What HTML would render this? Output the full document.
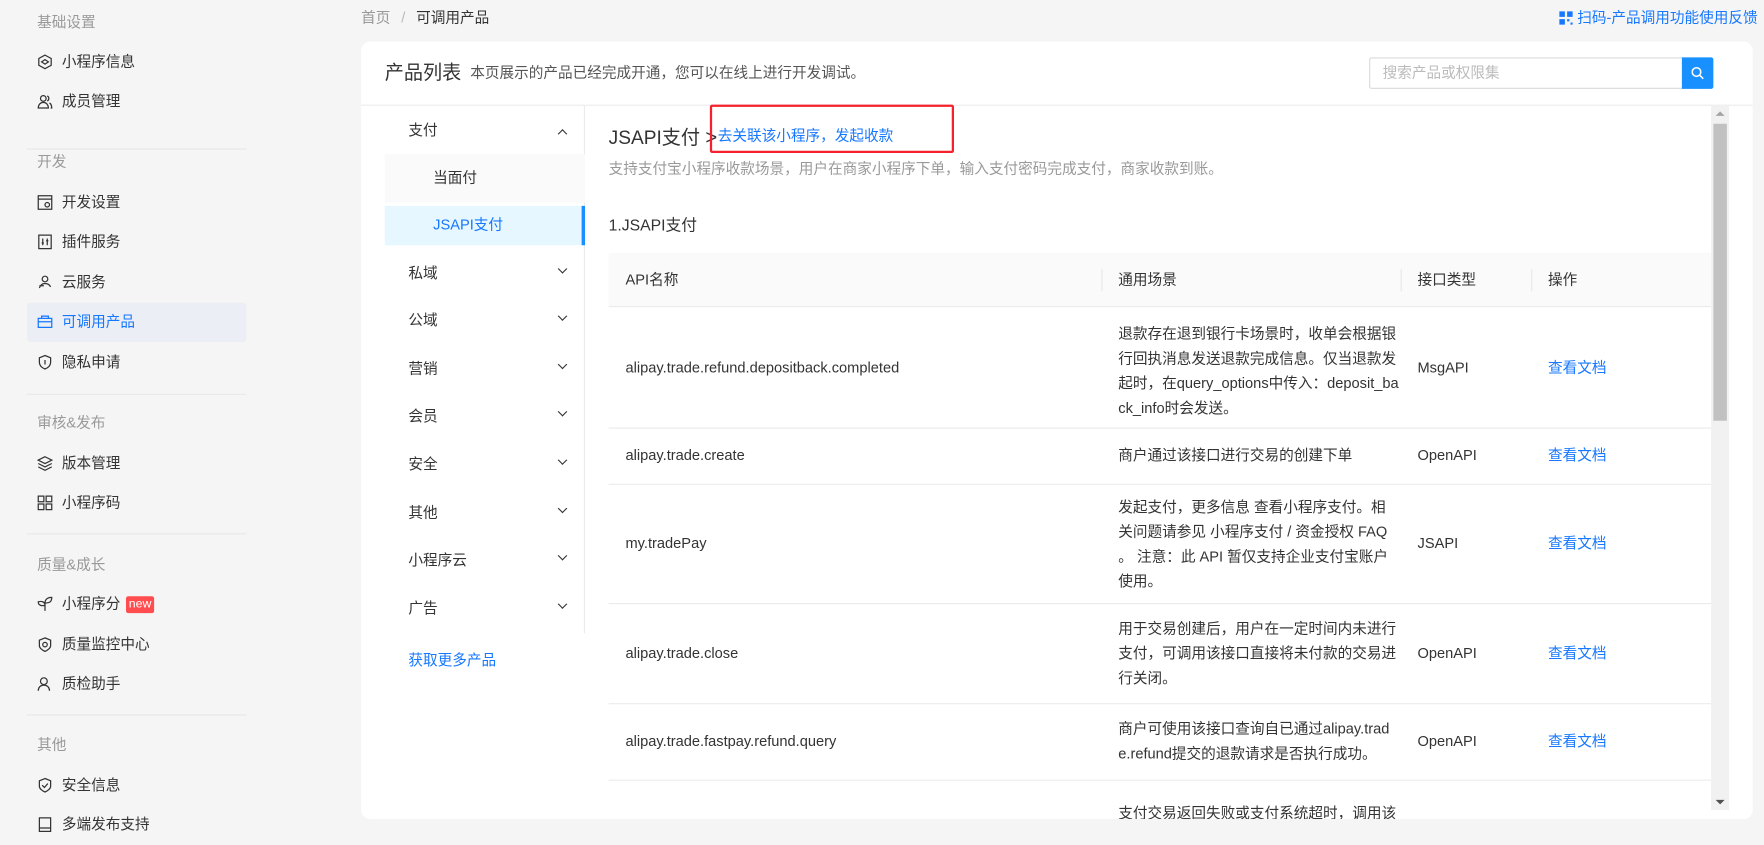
<!DOCTYPE html>
<html><head><meta charset="utf-8"><style>
*{box-sizing:border-box;margin:0;padding:0}
html,body{width:1764px;height:845px;overflow:hidden;background:#f5f5f5}
#w{position:absolute;left:0;top:0;width:1568px;height:751px;transform:scale(1.125);transform-origin:0 0;font-family:"Liberation Sans","Noto Sans CJK SC",sans-serif;font-size:13px;color:#333}
.a{position:absolute;white-space:nowrap;line-height:20px}
.sec{color:#999;left:33px}
.it{left:55px;color:#333}
.ic{position:absolute;left:33px;width:14px;height:14px}
.div{position:absolute;left:24px;width:195px;height:1px;background:#e8e8e8}
.card{position:absolute;left:321px;top:37px;width:1237px;height:691px;background:#fff;border-radius:8px;overflow:hidden}
.blue{color:#1677ff}
.mi{left:42px;color:#333}
.chev{position:absolute;left:176px;width:6px;height:6px;border-right:1.6px solid #333;border-bottom:1.6px solid #333;transform:rotate(45deg)}
.hl{position:absolute;left:220px;width:980px;height:1px;background:#ebebeb}
.td{position:absolute;line-height:22px;white-space:nowrap}
</style></head><body><div id="w">
<div class="a sec" style="top:10px">基础设置</div>
<svg class="ic" style="top:48px" viewBox="0 0 14 14" fill="none" stroke="#333" stroke-width="1.1"><path d="M7 1l5.5 3v6L7 13 1.5 10V4z"/><path d="M4 7l3-2 3 2-3 2z"/></svg>
<div class="a it" style="top:45px">小程序信息</div>
<svg class="ic" style="top:83px" viewBox="0 0 14 14" fill="none" stroke="#333" stroke-width="1.1"><circle cx="5.5" cy="4.5" r="2.5"/><path d="M1 13c0-3 2-5 4.5-5S10 10 10 13zM9 2.3a2.5 2.5 0 010 4.5M11 8.5c1.3.8 2 2.5 2 4.5h-1"/></svg>
<div class="a it" style="top:80px">成员管理</div>
<div class="div" style="top:132px"></div>
<div class="a sec" style="top:134px">开发</div>
<svg class="ic" style="top:173px" viewBox="0 0 14 14" fill="none" stroke="#333" stroke-width="1.1"><rect x="1" y="1" width="12" height="12"/><path d="M1 4h12"/><circle cx="9" cy="9" r="2"/></svg>
<div class="a it" style="top:170px">开发设置</div>
<svg class="ic" style="top:208px" viewBox="0 0 14 14" fill="none" stroke="#333" stroke-width="1.1"><rect x="1.5" y="1" width="11" height="12"/><path d="M5 4v6M9 4v6M4 8h2M8 6h2"/></svg>
<div class="a it" style="top:205px">插件服务</div>
<svg class="ic" style="top:244px" viewBox="0 0 14 14" fill="none" stroke="#333" stroke-width="1.1"><circle cx="7" cy="4" r="2.5"/><path d="M2 12c1-3 3-4 5-4s4 1 5 3M2 10h4"/></svg>
<div class="a it" style="top:241px">云服务</div>
<div style="position:absolute;left:24px;top:269px;width:195px;height:35px;background:#ebeef5;border-radius:3px"></div>
<svg class="ic" style="top:279px" viewBox="0 0 14 14" fill="none" stroke="#1677ff" stroke-width="1.1"><path d="M1 4h12v8H1zM4 4V2h6v2M1 7h12"/></svg>
<div class="a it blue" style="top:276px">可调用产品</div>
<svg class="ic" style="top:315px" viewBox="0 0 14 14" fill="none" stroke="#333" stroke-width="1.1"><path d="M7 1l5 2v4c0 3-2.5 5-5 6-2.5-1-5-3-5-6V3z"/><path d="M7 5v4"/></svg>
<div class="a it" style="top:312px">隐私申请</div>
<div class="div" style="top:350px"></div>
<div class="a sec" style="top:366px">审核&amp;发布</div>
<svg class="ic" style="top:405px" viewBox="0 0 14 14" fill="none" stroke="#333" stroke-width="1.1"><path d="M7 1l6 3-6 3-6-3zM1 7l6 3 6-3M1 10l6 3 6-3"/></svg>
<div class="a it" style="top:402px">版本管理</div>
<svg class="ic" style="top:440px" viewBox="0 0 14 14" fill="none" stroke="#333" stroke-width="1.1"><rect x="1" y="1" width="5" height="5"/><rect x="8" y="1" width="5" height="5"/><rect x="1" y="8" width="5" height="5"/><rect x="8" y="8" width="5" height="5"/></svg>
<div class="a it" style="top:437px">小程序码</div>
<div class="div" style="top:474px"></div>
<div class="a sec" style="top:492px">质量&amp;成长</div>
<svg class="ic" style="top:530px" viewBox="0 0 14 14" fill="none" stroke="#333" stroke-width="1.1"><path d="M7 13V6C7 3 9 1 13 1c0 4-2 5-6 5M7 8C7 5 4 4 1 5c0 3 3 4 6 3"/></svg>
<div class="a it" style="top:527px">小程序分</div>
<div style="position:absolute;left:112px;top:530px;width:25px;height:15px;background:#ff4d4f;border-radius:2px;color:#fff;font-size:11px;line-height:15px;text-align:center">new</div>
<svg class="ic" style="top:566px" viewBox="0 0 14 14" fill="none" stroke="#333" stroke-width="1.1"><path d="M7 1l5 2v5c0 2-2.5 4-5 5-2.5-1-5-3-5-5V3z"/><circle cx="7" cy="7" r="2"/></svg>
<div class="a it" style="top:563px">质量监控中心</div>
<svg class="ic" style="top:601px" viewBox="0 0 14 14" fill="none" stroke="#333" stroke-width="1.1"><circle cx="6" cy="4.5" r="3"/><path d="M1 13c0-3 2-5 5-5s5 2 5 5"/></svg>
<div class="a it" style="top:598px">质检助手</div>
<div class="div" style="top:635px"></div>
<div class="a sec" style="top:652px">其他</div>
<svg class="ic" style="top:691px" viewBox="0 0 14 14" fill="none" stroke="#333" stroke-width="1.1"><path d="M7 1l5 2v5c0 2-2.5 4-5 5-2.5-1-5-3-5-5V3z"/><path d="M4.5 7l2 2 3-3.5"/></svg>
<div class="a it" style="top:688px">安全信息</div>
<svg class="ic" style="top:726px" viewBox="0 0 14 14" fill="none" stroke="#333" stroke-width="1.1"><rect x="2" y="1" width="10" height="12"/><path d="M2 10h10"/></svg>
<div class="a it" style="top:723px">多端发布支持</div>

<div class="a" style="left:321px;top:6px;color:#999">首页 <span style="margin:0 6px;color:#bbb">/</span> <span style="color:#333">可调用产品</span></div>
<svg style="position:absolute;left:1386px;top:10px" width="12" height="12" viewBox="0 0 12 12" fill="#1677ff"><rect x="0" y="0" width="5" height="5"/><rect x="7" y="0" width="5" height="5"/><rect x="0" y="7" width="5" height="5"/><rect x="7" y="7" width="2" height="2"/><rect x="10" y="10" width="2" height="2"/></svg>
<div class="a blue" style="left:1402px;top:6px">扫码-产品调用功能使用反馈</div>

<div class="card">
  <div class="a" style="left:21px;top:16px;font-size:17px;line-height:24px;color:#333">产品列表</div>
  <div class="a" style="left:97px;top:18px;color:#555">本页展示的产品已经完成开通，您可以在线上进行开发调试。</div>
  <div style="position:absolute;left:896px;top:14px;width:280px;height:28px;border:1px solid #d9d9d9;border-radius:2px 0 0 2px"></div>
  <div class="a" style="left:908px;top:18px;color:#bbb">搜索产品或权限集</div>
  <div style="position:absolute;left:1174px;top:14px;width:28px;height:28px;background:#1890ff;border-radius:0 2px 2px 0"></div>
  <svg style="position:absolute;left:1182px;top:22px" width="12" height="12" viewBox="0 0 12 12" fill="none" stroke="#fff" stroke-width="1.4"><circle cx="5" cy="5" r="3.8"/><path d="M8 8l3 3"/></svg>
  <div style="position:absolute;left:0;top:56px;width:1237px;height:1px;background:#ebebeb"></div>

  <div style="position:absolute;left:198px;top:57px;width:1px;height:469px;background:#ebebeb"></div>
  <div class="a mi blue" style="top:69px">支付</div>
  <div style="position:absolute;left:176px;top:79px;width:6px;height:6px;border-left:1.6px solid #333;border-top:1.6px solid #333;transform:rotate(45deg)"></div>
  <div style="position:absolute;left:21px;top:100px;width:178px;height:43px;background:#fafafa"></div>
  <div class="a" style="left:64px;top:111px">当面付</div>
  <div style="position:absolute;left:21px;top:146px;width:178px;height:35px;background:#e6f7ff;border-right:3px solid #1890ff"></div>
  <div class="a blue" style="left:64px;top:153px">JSAPI支付</div>
  <div class="a mi" style="top:196px">私域</div><div class="chev" style="top:199px"></div>
  <div class="a mi" style="top:238px">公域</div><div class="chev" style="top:241px"></div>
  <div class="a mi" style="top:281px">营销</div><div class="chev" style="top:284px"></div>
  <div class="a mi" style="top:323px">会员</div><div class="chev" style="top:326px"></div>
  <div class="a mi" style="top:366px">安全</div><div class="chev" style="top:369px"></div>
  <div class="a mi" style="top:409px">其他</div><div class="chev" style="top:412px"></div>
  <div class="a mi" style="top:451px">小程序云</div><div class="chev" style="top:454px"></div>
  <div class="a mi" style="top:494px">广告</div><div class="chev" style="top:497px"></div>
  <div class="a blue" style="left:42px;top:540px">获取更多产品</div>

  <div class="a" style="left:220px;top:73px;font-size:17px;line-height:24px">JSAPI支付 <span style="font-size:18px">&gt;</span></div>
  <div class="a blue" style="left:317px;top:74px">去关联该小程序，发起收款</div>
  <div style="position:absolute;left:310px;top:56px;width:217px;height:43px;border:2px solid #f5222d;border-radius:2px"></div>
  <div class="a" style="left:220px;top:103px;color:#999">支持支付宝小程序收款场景，用户在商家小程序下单，输入支付密码完成支付，商家收款到账。</div>
  <div class="a" style="left:220px;top:153px;font-size:14px;color:#333">1.JSAPI支付</div>

  <div style="position:absolute;left:220px;top:188px;width:980px;height:48px;background:#fafafa;border-bottom:1px solid #ebebeb"></div>
  <div style="position:absolute;left:658px;top:202px;width:1px;height:20px;background:#e8e8e8"></div>
  <div style="position:absolute;left:924px;top:202px;width:1px;height:20px;background:#e8e8e8"></div>
  <div style="position:absolute;left:1040px;top:202px;width:1px;height:20px;background:#e8e8e8"></div>
  <div class="a" style="left:235px;top:202px">API名称</div>
  <div class="a" style="left:673px;top:202px">通用场景</div>
  <div class="a" style="left:939px;top:202px">接口类型</div>
  <div class="a" style="left:1055px;top:202px">操作</div>

  <div class="td" style="left:235px;top:279px">alipay.trade.refund.depositback.completed</div>
  <div class="td" style="left:673px;top:249px">退款存在退到银行卡场景时，收单会根据银<br>行回执消息发送退款完成信息。仅当退款发<br>起时，在query_options中传入：deposit_ba<br>ck_info时会发送。</div>
  <div class="td" style="left:939px;top:279px">MsgAPI</div>
  <div class="td blue" style="left:1055px;top:279px">查看文档</div>
  <div class="hl" style="top:343px"></div>
  <div class="td" style="left:235px;top:357px">alipay.trade.create</div>
  <div class="td" style="left:673px;top:357px">商户通过该接口进行交易的创建下单</div>
  <div class="td" style="left:939px;top:357px">OpenAPI</div>
  <div class="td blue" style="left:1055px;top:357px">查看文档</div>
  <div class="hl" style="top:393px"></div>
  <div class="td" style="left:235px;top:435px">my.tradePay</div>
  <div class="td" style="left:673px;top:403px">发起支付，更多信息 查看小程序支付。相<br>关问题请参见 小程序支付 / 资金授权 FAQ<br>。 注意：此 API 暂仅支持企业支付宝账户<br>使用。</div>
  <div class="td" style="left:939px;top:435px">JSAPI</div>
  <div class="td blue" style="left:1055px;top:435px">查看文档</div>
  <div class="hl" style="top:499px"></div>
  <div class="td" style="left:235px;top:533px">alipay.trade.close</div>
  <div class="td" style="left:673px;top:511px">用于交易创建后，用户在一定时间内未进行<br>支付，可调用该接口直接将未付款的交易进<br>行关闭。</div>
  <div class="td" style="left:939px;top:533px">OpenAPI</div>
  <div class="td blue" style="left:1055px;top:533px">查看文档</div>
  <div class="hl" style="top:588px"></div>
  <div class="td" style="left:235px;top:611px">alipay.trade.fastpay.refund.query</div>
  <div class="td" style="left:673px;top:600px">商户可使用该接口查询自已通过alipay.trad<br>e.refund提交的退款请求是否执行成功。</div>
  <div class="td" style="left:939px;top:611px">OpenAPI</div>
  <div class="td blue" style="left:1055px;top:611px">查看文档</div>
  <div class="hl" style="top:656px"></div>
  <div class="td" style="left:673px;top:675px">支付交易返回失败或支付系统超时，调用该</div>

  <div style="position:absolute;left:1200px;top:57px;width:16px;height:626px;background:#f1f1f1"></div>
  <div style="position:absolute;left:1202px;top:73px;width:12px;height:264px;background:#c1c1c1"></div>
  <div style="position:absolute;left:1204px;top:62px;width:0;height:0;border-left:4px solid transparent;border-right:4px solid transparent;border-bottom:4px solid #a3a3a3"></div>
  <div style="position:absolute;left:1204px;top:674px;width:0;height:0;border-left:4px solid transparent;border-right:4px solid transparent;border-top:4px solid #505050"></div>
</div>
</div></body></html>
